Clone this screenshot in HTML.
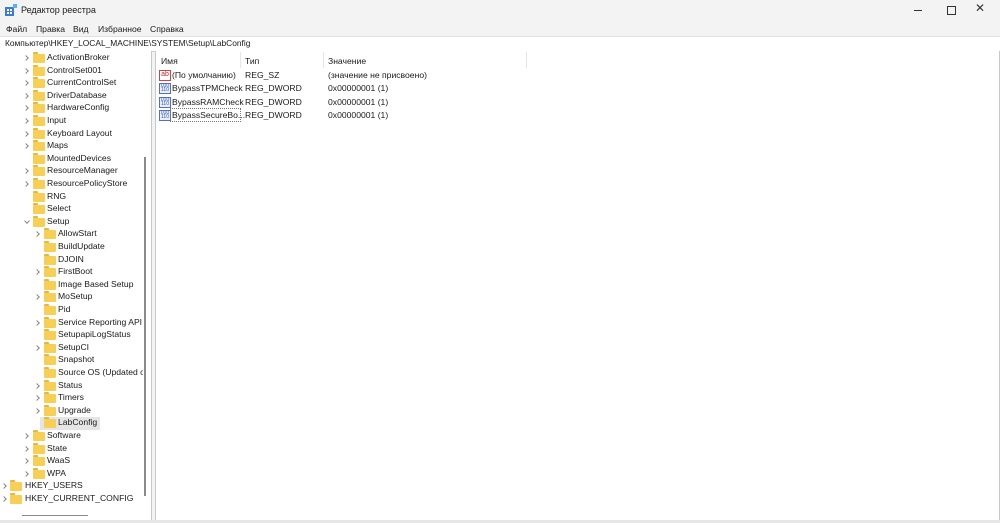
<!DOCTYPE html><html><head><meta charset="utf-8"><style>
body{margin:0;width:1000px;height:523px;background:#f3f3f3;font-family:"Segoe UI","Liberation Sans","DejaVu Sans",sans-serif;font-size:8.6px;color:#1a1a1a;position:relative;overflow:hidden}
.a{position:absolute;white-space:nowrap}
.f{position:absolute;width:12px;height:9px;background:#f8cf55;border-radius:1px}
.f:before{content:"";position:absolute;left:0;top:-2px;width:5px;height:2px;background:#e9b73e;border-radius:1px 1px 0 0}
.c{position:absolute;width:3px;height:3px;border-right:1px solid #888;border-bottom:1px solid #888;transform:rotate(-45deg)}
.ri{position:absolute;width:10px;height:9px;border:1px solid #5570b8;background:#e8eefb;font-size:5px;color:#2f55b0;line-height:4px;text-align:center;overflow:hidden}
</style></head><body>
<svg class="a" style="left:5px;top:4px" width="12" height="13"><rect x="0" y="3" width="9" height="9" fill="#3b7bd8"/><rect x="2" y="5" width="2" height="2" fill="#fff"/><rect x="5" y="5" width="2" height="2" fill="#fff"/><rect x="2" y="8" width="2" height="2" fill="#fff"/><rect x="5" y="8" width="2" height="2" fill="#fff"/><rect x="8" y="0" width="4" height="4" fill="#5ab0f0"/></svg>
<div class="a" style="left:21px;top:5px;font-size:9px">Редактор реестра</div>
<div class="a" style="left:914px;top:10px;width:8px;height:1px;background:#333"></div>
<div class="a" style="left:947px;top:6px;width:7px;height:7px;border:1px solid #333"></div>
<div class="a" style="left:975px;top:1px;font-size:12px;color:#333">✕</div>
<div class="a" style="left:6px;top:24px">Файл</div>
<div class="a" style="left:36px;top:24px">Правка</div>
<div class="a" style="left:73px;top:24px">Вид</div>
<div class="a" style="left:98px;top:24px">Избранное</div>
<div class="a" style="left:150px;top:24px">Справка</div>
<div class="a" style="left:0;top:36px;width:1000px;height:14px;background:#fff;border-top:1px solid #e0e0e0;border-bottom:1px solid #d0d0d0"></div>
<div class="a" style="left:5px;top:38px;font-size:8.4px">Компьютер\HKEY_LOCAL_MACHINE\SYSTEM\Setup\LabConfig</div>
<div class="a" style="left:0;top:51px;width:151px;height:469px;background:#fff;border-right:1px solid #c8c8c8"></div>
<div class="a" style="left:155px;top:51px;width:843px;height:469px;background:#fff;border-left:1px solid #c8c8c8;border-right:1px solid #c8c8c8"></div>
<div class="a" style="left:40px;top:417px;width:60px;height:13px;background:#e5e5e5"></div>
<div class="a" id="t" style="left:0;top:0;width:143px;height:515px;overflow:hidden"></div>
<div class="a" style="left:144px;top:157px;width:2px;height:339px;background:#8a8a8a"></div>
<div class="a" style="left:22px;top:515px;width:66px;height:1px;background:#8a8a8a"></div>
<div class="a" style="left:0;top:520px;width:1000px;height:3px;background:#e6e6e6"></div>
<div class="a" style="left:240px;top:52px;width:1px;height:16px;background:#e5e5e5"></div>
<div class="a" style="left:323px;top:52px;width:1px;height:16px;background:#e5e5e5"></div>
<div class="a" style="left:526px;top:52px;width:1px;height:16px;background:#e5e5e5"></div>
<div class="a" style="left:161px;top:56px">Имя</div>
<div class="a" style="left:245px;top:56px">Тип</div>
<div class="a" style="left:328px;top:56px">Значение</div>
<div class="ri" style="left:159px;top:70px;border-color:#c44;background:#fff;color:#c22;font-size:7px;line-height:8px">ab</div>
<div class="a" style="left:172px;top:70px">(По умолчанию)</div><div class="a" style="left:245px;top:70px">REG_SZ</div><div class="a" style="left:328px;top:70px">(значение не присвоено)</div>
<div class="ri" style="left:159px;top:83px">010<br>110</div>
<div class="a" style="left:172px;top:83px">BypassTPMCheck</div><div class="a" style="left:245px;top:83px">REG_DWORD</div><div class="a" style="left:328px;top:83px">0x00000001 (1)</div>
<div class="ri" style="left:159px;top:97px">010<br>110</div>
<div class="a" style="left:172px;top:97px">BypassRAMCheck</div><div class="a" style="left:245px;top:97px">REG_DWORD</div><div class="a" style="left:328px;top:97px">0x00000001 (1)</div>
<div class="ri" style="left:159px;top:110px">010<br>110</div>
<div class="a" style="left:170px;top:108px;width:69px;height:12px;border:1px dotted #777"></div>
<div class="a" style="left:172px;top:110px">BypassSecureBo...</div><div class="a" style="left:245px;top:110px">REG_DWORD</div><div class="a" style="left:328px;top:110px">0x00000001 (1)</div>
<script>
var rows=[[2,1,"ActivationBroker"],[2,1,"ControlSet001"],[2,1,"CurrentControlSet"],[2,1,"DriverDatabase"],[2,1,"HardwareConfig"],[2,1,"Input"],[2,1,"Keyboard Layout"],[2,1,"Maps"],[2,0,"MountedDevices"],[2,1,"ResourceManager"],[2,1,"ResourcePolicyStore"],[2,0,"RNG"],[2,0,"Select"],[2,2,"Setup"],[3,1,"AllowStart"],[3,0,"BuildUpdate"],[3,0,"DJOIN"],[3,1,"FirstBoot"],[3,0,"Image Based Setup"],[3,1,"MoSetup"],[3,0,"Pid"],[3,1,"Service Reporting API"],[3,0,"SetupapiLogStatus"],[3,1,"SetupCI"],[3,0,"Snapshot"],[3,0,"Source OS (Updated o"],[3,1,"Status"],[3,1,"Timers"],[3,1,"Upgrade"],[3,0,"LabConfig"],[2,1,"Software"],[2,1,"State"],[2,1,"WaaS"],[2,1,"WPA"],[1,1,"HKEY_USERS"],[1,1,"HKEY_CURRENT_CONFIG"]];
var h="";rows.forEach(function(r,i){var y=58+i*12.6;var L=r[0];var cx=L==1?2:L==2?24:35;var fx=L==1?10:L==2?33:44;var tx=L==1?25:L==2?47:58;
if(r[1]==1)h+='<div class="c" style="left:'+cx+'px;top:'+(y-2)+'px"></div>';
if(r[1]==2)h+='<div class="c" style="left:'+(cx+1)+'px;top:'+(y-3)+'px;transform:rotate(45deg)"></div>';
h+='<div class="f" style="left:'+fx+'px;top:'+(y-4)+'px"></div>';
h+='<div class="a" style="left:'+tx+'px;top:'+(y-6)+'px">'+r[2]+'</div>';});
document.getElementById("t").innerHTML=h;
</script>
</body></html>
